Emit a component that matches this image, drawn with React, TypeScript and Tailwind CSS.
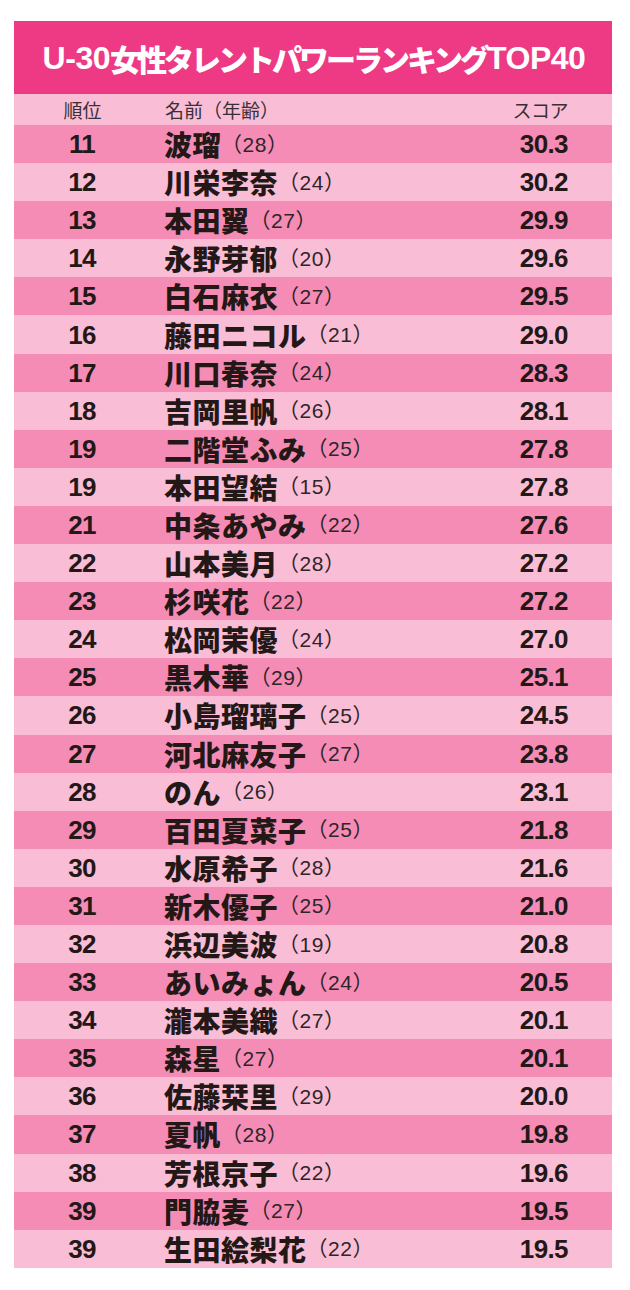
import React from "react";

const rows: [string, string, string, string][] = [
  ["11", "波瑠", "28", "30.3"],
  ["12", "川栄李奈", "24", "30.2"],
  ["13", "本田翼", "27", "29.9"],
  ["14", "永野芽郁", "20", "29.6"],
  ["15", "白石麻衣", "27", "29.5"],
  ["16", "藤田ニコル", "21", "29.0"],
  ["17", "川口春奈", "24", "28.3"],
  ["18", "吉岡里帆", "26", "28.1"],
  ["19", "二階堂ふみ", "25", "27.8"],
  ["19", "本田望結", "15", "27.8"],
  ["21", "中条あやみ", "22", "27.6"],
  ["22", "山本美月", "28", "27.2"],
  ["23", "杉咲花", "22", "27.2"],
  ["24", "松岡茉優", "24", "27.0"],
  ["25", "黒木華", "29", "25.1"],
  ["26", "小島瑠璃子", "25", "24.5"],
  ["27", "河北麻友子", "27", "23.8"],
  ["28", "のん", "26", "23.1"],
  ["29", "百田夏菜子", "25", "21.8"],
  ["30", "水原希子", "28", "21.6"],
  ["31", "新木優子", "25", "21.0"],
  ["32", "浜辺美波", "19", "20.8"],
  ["33", "あいみょん", "24", "20.5"],
  ["34", "瀧本美織", "27", "20.1"],
  ["35", "森星", "27", "20.1"],
  ["36", "佐藤栞里", "29", "20.0"],
  ["37", "夏帆", "28", "19.8"],
  ["38", "芳根京子", "22", "19.6"],
  ["39", "門脇麦", "27", "19.5"],
  ["39", "生田絵梨花", "22", "19.5"],
];

const latin = { fontFamily: '"Liberation Sans", Arial, sans-serif' };
const cjk = { fontFamily: '"Noto Sans CJK JP", "Noto Sans", sans-serif' };
const mixed = { fontFamily: '"Liberation Sans", "Noto Sans CJK JP", sans-serif' };

export default function App() {
  return (
    <div className="w-[630px] h-[1290px] bg-white pt-[21px] pl-[14px]">
      <div className="w-[598px] flex flex-col text-[#231815]">
        <div className="h-[73px] bg-[#ee3a85] flex items-center justify-center text-white font-bold leading-none pl-[2px]">
          <span className="text-[32px] tracking-[-0.5px]" style={latin}>U-30</span>
          <span className="text-[30px] font-black tracking-[-3px]" style={cjk}>女性タレントパワーランキング</span>
          <span className="text-[32px] tracking-[-0.5px]" style={latin}>TOP40</span>
        </div>
        <div className="h-[31px] bg-[#f9bed6] grid grid-cols-[136px_1fr_auto] items-center pr-[44px] text-[19px] text-[#3a3034] leading-none" style={cjk}>
          <div className="text-center pl-[1px]">順位</div>
          <div className="pl-[15px]">名前（年齢）</div>
          <div className="tracking-[-0.5px]">スコア</div>
        </div>
        {rows.map(([rank, name, age, score], i) => (
          <div
            key={i}
            className={`h-[38.1px] grid grid-cols-[136px_1fr_auto] items-center pr-[44px] leading-none ${
              i % 2 === 0 ? "bg-[#f58cb6]" : "bg-[#f9bed6]"
            }`}
          >
            <div className="text-center text-[26px] font-bold tracking-[-0.8px]" style={latin}>
              {rank}
            </div>
            <div className="pl-[14px] flex items-center whitespace-nowrap" style={cjk}>
              <span className="text-[28px] font-black tracking-[0.5px]">{name}</span>
              <span className="text-[21px] font-normal text-[#2e2528] tracking-[0.5px]" style={mixed}>（{age}）</span>
            </div>
            <div className="text-[26px] font-bold tracking-[-0.6px]" style={latin}>
              {score}
            </div>
          </div>
        ))}
      </div>
    </div>
  );
}
